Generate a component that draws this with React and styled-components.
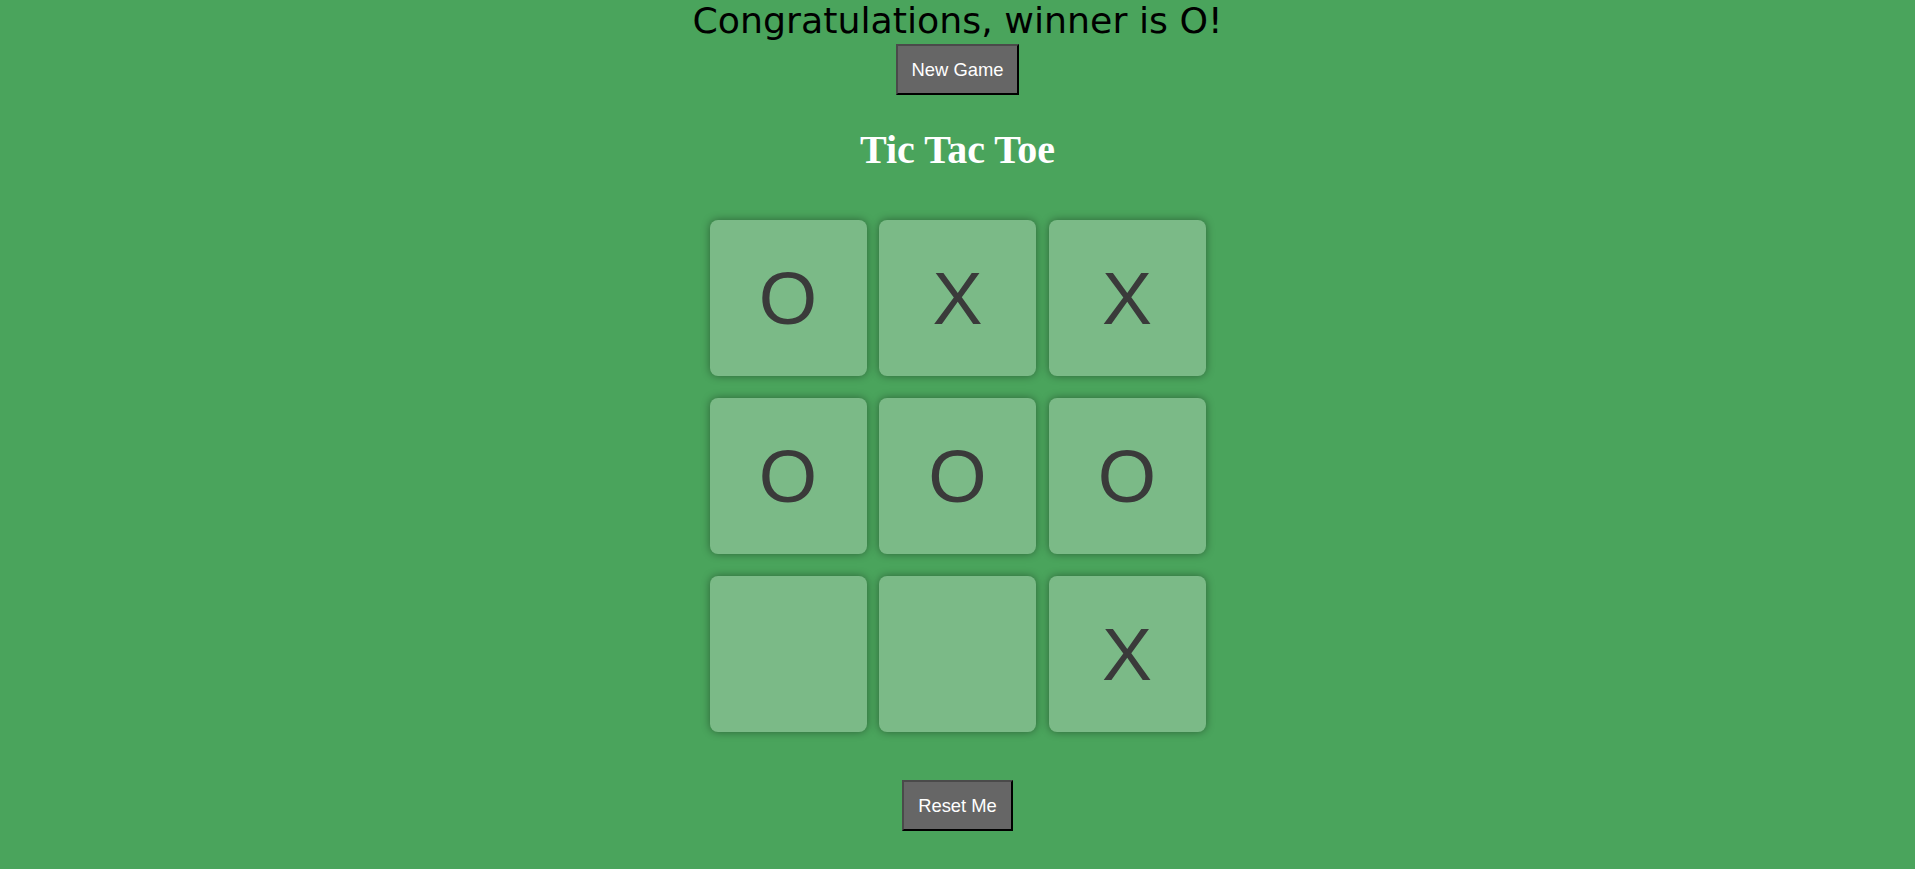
import React from "react";
import styled, { createGlobalStyle } from "styled-components";

const board = ["O", "X", "X", "O", "O", "O", "", "", "X"];

function App() {
  return (
    <>
      <GlobalStyle />
      <Page>
        <Message>Congratulations, winner is O!</Message>
        <GameButton>New Game</GameButton>
        <Title>Tic Tac Toe</Title>
        <Board>
          {board.map((mark, i) => (
            <Square key={i}>{mark}</Square>
          ))}
        </Board>
        <GameButton $top={48}>Reset Me</GameButton>
      </Page>
    </>
  );
}

export default App;

const GlobalStyle = createGlobalStyle`
  html, body {
    margin: 0;
    padding: 0;
    background-color: #4aa45c;
    min-height: 100%;
  }
`;

const Page = styled.div`
  display: flex;
  flex-direction: column;
  align-items: center;
  min-height: 869px;
  background-color: #4aa45c;
`;

const Message = styled.div`
  font-family: "DejaVu Sans", Verdana, sans-serif;
  font-size: 36.3px;
  line-height: 42px;
  color: #000;
`;

const GameButton = styled.button`
  margin-top: ${(props) => props.$top || 2}px;
  padding: 12px 14px;
  font-family: "Liberation Sans", Arial, sans-serif;
  font-size: 18.4px;
  line-height: 23px;
  color: #fff;
  background-color: #666666;
  border: 2px solid;
  border-color: #4a4a4a #000 #000 #4a4a4a;
  cursor: pointer;
`;

const Title = styled.h1`
  margin: 32px 0 0;
  font-family: "Liberation Serif", "Times New Roman", serif;
  font-size: 40px;
  line-height: 46px;
  font-weight: bold;
  color: #fff;
`;

const Board = styled.div`
  display: grid;
  grid-template-columns: repeat(3, 157px);
  grid-auto-rows: 156px;
  column-gap: 12.5px;
  row-gap: 22px;
  margin-top: 47px;
`;

const Square = styled.div`
  display: flex;
  align-items: center;
  justify-content: center;
  background-color: #7bba87;
  border-radius: 8px;
  box-shadow: 0 0 8px rgba(0, 0, 0, 0.4);
  font-family: "Liberation Sans", Arial, sans-serif;
  font-size: 75px;
  color: #3a3a3a;
`;
